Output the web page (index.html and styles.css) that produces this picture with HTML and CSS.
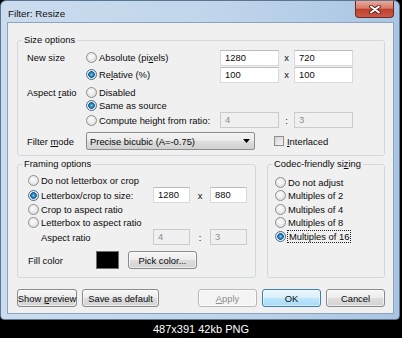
FILE: index.html
```html
<!DOCTYPE html>
<html lang="en">

<head>
  <meta charset="UTF-8">
  <meta name="viewport" content="width=device-width, initial-scale=1.0">
  <title>Filter: Resize</title>
  <link rel="stylesheet" href="styles.css">
</head>

<body>
  <div class="window">
    <div class="titlebar">
      <span class="title">Filter: Resize</span>
      <span class="close-btn">
        <svg width="12" height="9" viewBox="0 0 12 9">
          <path d="M2 1.5 L10 7.5 M10 1.5 L2 7.5" stroke="#5a1a12" stroke-width="3.6" stroke-linecap="round" />
          <path d="M2 1.5 L10 7.5 M10 1.5 L2 7.5" stroke="#fff" stroke-width="2" stroke-linecap="round" />
        </svg>
      </span>
    </div>

    <div class="client">
      <!-- Size options -->
      <fieldset class="group size-group">
        <legend>Size options</legend>
        <div class="group-body size-body">
          <div class="size-row h17">
            <span class="label">New size</span>
            <span class="option"><span class="radio"></span><span>Absolute (pi<u>x</u>els)</span></span>
            <span class="field">1280</span>
            <span class="sep">x</span>
            <span class="field">720</span>
          </div>
          <div class="size-row h17">
            <span></span>
            <span class="option"><span class="radio on"></span><span>Re<u>l</u>ative (%)</span></span>
            <span class="field">100</span>
            <span class="sep">x</span>
            <span class="field">100</span>
          </div>
          <div class="size-row h14 mt2">
            <span class="label">Aspect <u>r</u>atio</span>
            <span class="option"><span class="radio"></span><span>Disabled</span></span>
          </div>
          <div class="size-row h13">
            <span></span>
            <span class="option"><span class="radio on"></span><span>Same as source</span></span>
          </div>
          <div class="size-row h16">
            <span></span>
            <span class="option"><span class="radio"></span><span>Compute height from ratio:</span></span>
            <span class="field disabled">4</span>
            <span class="sep">:</span>
            <span class="field disabled">3</span>
          </div>
          <div class="filter-row">
            <span class="label">Filter <u>m</u>ode</span>
            <span class="select">
              <span>Precise bicubic (A=-0.75)</span>
              <svg width="7" height="4" viewBox="0 0 7 4"><path d="M0 0 H7 L3.5 4 Z" fill="#000" /></svg>
            </span>
            <span></span>
            <span class="option"><span class="checkbox"></span><span><u>I</u>nterlaced</span></span>
          </div>
        </div>
      </fieldset>

      <div class="middle">
        <!-- Framing options -->
        <fieldset class="group framing-group">
          <legend>Framing options</legend>
          <div class="group-body framing-body">
            <div class="frame-row h13">
              <span class="option wide"><span class="radio"></span><span>Do not letterbox or crop</span></span>
            </div>
            <div class="frame-row h16">
              <span class="option"><span class="radio on"></span><span>Letterbox/crop to size:</span></span>
              <span class="field">1280</span>
              <span class="sep">x</span>
              <span class="field">880</span>
            </div>
            <div class="frame-row h12">
              <span class="option wide"><span class="radio"></span><span>Crop to aspect ratio</span></span>
            </div>
            <div class="frame-row h14">
              <span class="option wide"><span class="radio"></span><span>Letterbox to aspect ratio</span></span>
            </div>
            <div class="frame-row h16">
              <span class="label indent">Aspect ratio</span>
              <span class="field disabled">4</span>
              <span class="sep">:</span>
              <span class="field disabled">3</span>
            </div>
            <div class="fill-row">
              <span class="fill-label">Fill color</span>
              <span class="swatch"></span>
              <span class="btn pick"><span>Pick color...</span></span>
            </div>
          </div>
        </fieldset>

        <!-- Codec-friendly sizing -->
        <fieldset class="group codec-group">
          <legend>Codec-friendly si<u>z</u>ing</legend>
          <div class="group-body codec-body">
            <div class="codec-row h14"><span class="option"><span class="radio"></span><span>Do not adjust</span></span></div>
            <div class="codec-row h13"><span class="option"><span class="radio"></span><span>Multiples of 2</span></span></div>
            <div class="codec-row h14"><span class="option"><span class="radio"></span><span>Multiples of 4</span></span></div>
            <div class="codec-row h13"><span class="option"><span class="radio"></span><span>Multiples of 8</span></span></div>
            <div class="codec-row h14"><span class="option"><span class="radio on"></span><span class="focus">Multiples of 16</span></span></div>
          </div>
        </fieldset>
      </div>

      <div class="buttons">
        <span class="btn w60"><span>Show <u>p</u>review</span></span>
        <span class="btn w77"><span>Save as default</span></span>
        <span class="btn w59 disabled push"><span><u>A</u>pply</span></span>
        <span class="btn w59 default"><span>OK</span></span>
        <span class="btn w59"><span>Cancel</span></span>
      </div>
    </div>
  </div>

  <div class="caption">487x391 42kb PNG</div>
</body>

</html>
```

FILE: styles.css
```css
/* Global */
* {
  box-sizing: border-box;
}

body {
  margin: 0;
  background: #000;
  font-family: "Liberation Sans", Arial, sans-serif;
  font-size: 9.4px;
  color: #0a0a0a;
}

u {
  text-decoration-thickness: 1px;
  text-underline-offset: 1px;
}

/* Window frame */
.window {
  width: 400px;
  height: 320px;
  border: 1px solid #5d7690;
  border-radius: 6px 6px 4px 4px;
  background: linear-gradient(to right, #cbdcee 0%, #c0d5eb 55%, #a9c5e3 100%);
  padding: 0 5px 5px 6px;
  display: flex;
  flex-direction: column;
}

.titlebar {
  height: 21px;
  display: flex;
  justify-content: space-between;
  align-items: flex-start;
}

.title {
  margin: 7px 0 0 1px;
  font-size: 9.8px;
  line-height: 12px;
  color: #101010;
}

.close-btn {
  width: 39px;
  height: 17px;
  border: 1px solid #6d2a22;
  border-top: none;
  border-radius: 0 0 4px 4px;
  background: linear-gradient(#e9a99c 0%, #d77a68 45%, #c0402c 52%, #c95a4a 100%);
  display: flex;
  align-items: center;
  justify-content: center;
}

/* Client area */
.client {
  flex: 1;
  border: 1px solid #8ba3bd;
  background: #f0f0f0;
  padding: 11px 8px 0 9px;
}

/* Group boxes */
.group {
  margin: 0;
  padding: 0;
  min-width: 0;
  border: 1px solid #d3d8dc;
  border-radius: 3px;
}

.group legend {
  margin-left: 4px;
  padding: 0 2px;
  line-height: 12px;
}

.label {
  white-space: nowrap;
}

.option {
  display: flex;
  align-items: center;
  gap: 2px;
  white-space: nowrap;
}

.radio {
  width: 11px;
  height: 11px;
  border-radius: 50%;
  border: 1px solid #8c8f92;
  background: radial-gradient(circle at 45% 40%, #fdfdfd 0%, #ececec 45%, #cfd2d5 100%);
  flex: none;
}

.radio.on {
  border-color: #4e6f8a;
  background: radial-gradient(circle at 50% 50%, #8fd3f5 0, #2f8cc8 1.5px, #135a8e 3px, #dfe6ec 3.6px, #f4f6f8 100%);
}

.checkbox {
  width: 10px;
  height: 10px;
  border: 1px solid #8e8f8f;
  background: linear-gradient(135deg, #d4d4d4, #f6f6f6);
  margin-right: 1px;
  flex: none;
}

.field {
  height: 16px;
  border: 1px solid #d6dadf;
  border-top-color: #b8bcc1;
  background: #fff;
  padding-left: 4px;
  line-height: 14px;
}

.field.disabled {
  background: #f0f0f0;
  border-color: #c9cbcd;
  color: #8c8c8c;
}

.sep {
  text-align: center;
}

/* Size options */
.size-body {
  padding: 3px 0 5px 9px;
}

.size-row {
  display: grid;
  grid-template-columns: 59px 134px 59px 15px 59px;
  align-items: center;
}

.filter-row {
  display: grid;
  grid-template-columns: 59px 169px 19px auto;
  align-items: center;
  height: 18px;
  margin-top: 4px;
}

.select {
  height: 18px;
  border: 1px solid #8c8c8c;
  border-radius: 2px;
  background: linear-gradient(#f3f3f3 0%, #ebebeb 50%, #dddddd 51%, #d1d1d1 100%);
  display: flex;
  align-items: center;
  justify-content: space-between;
  padding: 0 4px 0 3px;
}

.h12 { height: 12px; }
.h13 { height: 13px; }
.h14 { height: 14px; }
.h16 { height: 16px; }
.h17 { height: 17px; }
.mt2 { margin-top: 2px; }

/* Middle row */
.middle {
  display: flex;
  gap: 11px;
  margin-top: 2px;
}

.framing-group {
  width: 239px;
}

.codec-group {
  flex: 1;
}

.framing-body {
  padding: 4px 0 8px 10px;
}

.frame-row {
  display: grid;
  grid-template-columns: 125px 37px 20px 37px;
  align-items: center;
}

.option.wide {
  grid-column: 1 / 5;
}

.indent {
  padding-left: 13px;
}

.fill-row {
  display: flex;
  align-items: center;
  height: 18px;
  margin-top: 6px;
}

.fill-label {
  width: 68px;
}

.swatch {
  width: 23px;
  height: 18px;
  background: #000;
  border: 1px solid #6e6e6e;
  margin-right: 9px;
}

.codec-body {
  padding: 5px 0 0 7px;
}

.codec-row {
  display: flex;
  align-items: center;
}

.focus {
  outline: 1px dotted #222;
  outline-offset: 0;
  padding: 0 1px;
}

/* Buttons */
.buttons {
  display: flex;
  gap: 5px;
  margin-top: 11px;
}

.btn {
  height: 18px;
  border: 1px solid #8a8a8a;
  border-radius: 3px;
  background: linear-gradient(#f6f6f6 0%, #ececec 50%, #dedede 51%, #d2d2d2 100%);
  box-shadow: inset 0 0 0 1px rgba(255, 255, 255, 0.6);
  display: flex;
  align-items: center;
  justify-content: center;
  white-space: nowrap;
}

.btn.pick {
  width: 69px;
}

.w59 { width: 59px; }
.w60 { width: 60px; }
.w77 { width: 77px; }

.push {
  margin-left: auto;
}

.btn.disabled {
  border-color: #b8b8b8;
  background: #f4f4f4;
  color: #8d8d8d;
}

.btn.default {
  border-color: #3c7fb1;
  background: linear-gradient(#eaf6fd 0%, #d9f0fc 50%, #bee6fd 51%, #a7d9f5 100%);
  box-shadow: inset 0 0 0 1px rgba(255, 255, 255, 0.5);
}

/* Thumbnail caption */
.caption {
  height: 18px;
  line-height: 18px;
  text-align: center;
  color: #fff;
  font-family: "Liberation Sans", Arial, sans-serif;
  font-size: 11px;
}
```
